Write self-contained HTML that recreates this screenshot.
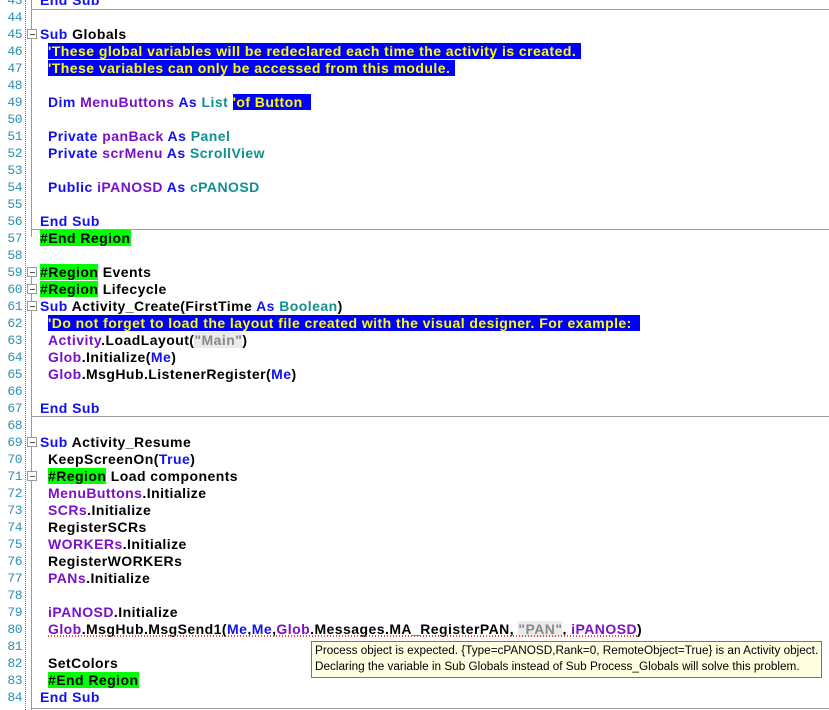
<!DOCTYPE html>
<html><head><meta charset="utf-8"><style>
body{margin:0;width:829px;height:710px;overflow:hidden;background:#fff;position:relative;font-family:"Liberation Sans",Arial,sans-serif}
.r{position:absolute;left:0;height:17px;width:829px}
.n{position:absolute;left:0;width:22px;text-align:right;font:13px "Liberation Mono",monospace;color:#2b91af;top:1px;letter-spacing:-0.5px}
.c{position:absolute;top:0px;font-weight:bold;font-size:14px;letter-spacing:0.45px;white-space:pre;color:#000;line-height:16px}
.k{color:#1010f0}.p{color:#7a10c8}.t{color:#109090}
.cm{background:#0000ff;color:#ffff00}
.g{background:#00ff00}
.s{background:#eaeaea;color:#888}
.sep{position:absolute;left:32px;right:0;height:1px;background:#a0a0a0}
.box{position:absolute;left:27px;width:8px;height:8px;border:1px solid #999;background:#fff}
.box:after{content:"";position:absolute;left:2px;top:4px;width:5px;height:1px;background:#555}
.vl{position:absolute;left:31px;width:1px;background:#999}
.dot{position:absolute;left:25px;top:0;height:710px;border-left:1px dotted #2b91af}
.tip{position:absolute;left:311px;top:641px;background:#ffffe1;border:1px solid #767676;font-size:11.75px;line-height:16px;padding:1px 0 0 3px;box-sizing:border-box;width:511px;height:37px;color:#000;white-space:nowrap;overflow:hidden}
.wav{position:absolute;left:48px;top:635px;width:590px;height:2px;background:repeating-linear-gradient(90deg,#e44 0 1px,transparent 1px 3px)}
</style></head><body>
<div class="dot"></div>
<div class="vl" style="top:0;height:237px"></div>
<div class="vl" style="top:274px;height:436px"></div>
<div class="sep" style="top:9px"></div>
<div class="sep" style="top:229px"></div>
<div class="sep" style="top:416px"></div>
<div class="sep" style="top:708px"></div>
<div class="box" style="top:29px"></div>
<div class="box" style="top:267px"></div>
<div class="box" style="top:284px"></div>
<div class="box" style="top:301px"></div>
<div class="box" style="top:437px"></div>
<div class="box" style="top:471px"></div>

<div class="r" style="top:-8px"><span class="n">43</span><span class="c k" style="left:40px">End Sub</span></div>
<div class="r" style="top:9px"><span class="n">44</span></div>
<div class="r" style="top:26px"><span class="n">45</span><span class="c" style="left:40px"><span class="k">Sub</span> Globals</span></div>
<div class="r" style="top:43px"><span class="n">46</span><span class="c" style="left:48px"><span class="cm">'These global variables will be redeclared each time the activity is created. </span></span></div>
<div class="r" style="top:60px"><span class="n">47</span><span class="c" style="left:48px"><span class="cm">'These variables can only be accessed from this module. </span></span></div>
<div class="r" style="top:77px"><span class="n">48</span></div>
<div class="r" style="top:94px"><span class="n">49</span><span class="c" style="left:48px"><span class="k">Dim</span> <span class="p">MenuButtons</span> <span class="k">As</span> <span class="t">List</span> <span class="cm">'of Button  </span></span></div>
<div class="r" style="top:111px"><span class="n">50</span></div>
<div class="r" style="top:128px"><span class="n">51</span><span class="c" style="left:48px"><span class="k">Private</span> <span class="p">panBack</span> <span class="k">As</span> <span class="t">Panel</span></span></div>
<div class="r" style="top:145px"><span class="n">52</span><span class="c" style="left:48px"><span class="k">Private</span> <span class="p">scrMenu</span> <span class="k">As</span> <span class="t">ScrollView</span></span></div>
<div class="r" style="top:162px"><span class="n">53</span></div>
<div class="r" style="top:179px"><span class="n">54</span><span class="c" style="left:48px"><span class="k">Public</span> <span class="p">iPANOSD</span> <span class="k">As</span> <span class="t">cPANOSD</span></span></div>
<div class="r" style="top:196px"><span class="n">55</span></div>
<div class="r" style="top:213px"><span class="n">56</span><span class="c k" style="left:40px">End Sub</span></div>
<div class="r" style="top:230px"><span class="n">57</span><span class="c" style="left:40px"><span class="g">#End Region</span></span></div>
<div class="r" style="top:247px"><span class="n">58</span></div>
<div class="r" style="top:264px"><span class="n">59</span><span class="c" style="left:40px"><span class="g">#Region</span> Events</span></div>
<div class="r" style="top:281px"><span class="n">60</span><span class="c" style="left:40px"><span class="g">#Region</span> Lifecycle</span></div>
<div class="r" style="top:298px"><span class="n">61</span><span class="c" style="left:40px"><span class="k">Sub</span> Activity_Create(FirstTime <span class="k">As</span> <span class="t">Boolean</span>)</span></div>
<div class="r" style="top:315px"><span class="n">62</span><span class="c" style="left:48px"><span class="cm">'Do not forget to load the layout file created with the visual designer. For example:  </span></span></div>
<div class="r" style="top:332px"><span class="n">63</span><span class="c" style="left:48px"><span class="p">Activity</span>.LoadLayout(<span class="s">"Main"</span>)</span></div>
<div class="r" style="top:349px"><span class="n">64</span><span class="c" style="left:48px"><span class="p">Glob</span>.Initialize(<span class="k">Me</span>)</span></div>
<div class="r" style="top:366px"><span class="n">65</span><span class="c" style="left:48px"><span class="p">Glob</span>.MsgHub.ListenerRegister(<span class="k">Me</span>)</span></div>
<div class="r" style="top:383px"><span class="n">66</span></div>
<div class="r" style="top:400px"><span class="n">67</span><span class="c k" style="left:40px">End Sub</span></div>
<div class="r" style="top:417px"><span class="n">68</span></div>
<div class="r" style="top:434px"><span class="n">69</span><span class="c" style="left:40px"><span class="k">Sub</span> Activity_Resume</span></div>
<div class="r" style="top:451px"><span class="n">70</span><span class="c" style="left:48px">KeepScreenOn(<span class="k">True</span>)</span></div>
<div class="r" style="top:468px"><span class="n">71</span><span class="c" style="left:48px"><span class="g">#Region</span> Load components</span></div>
<div class="r" style="top:485px"><span class="n">72</span><span class="c" style="left:48px"><span class="p">MenuButtons</span>.Initialize</span></div>
<div class="r" style="top:502px"><span class="n">73</span><span class="c" style="left:48px"><span class="p">SCRs</span>.Initialize</span></div>
<div class="r" style="top:519px"><span class="n">74</span><span class="c" style="left:48px">RegisterSCRs</span></div>
<div class="r" style="top:536px"><span class="n">75</span><span class="c" style="left:48px"><span class="p">WORKERs</span>.Initialize</span></div>
<div class="r" style="top:553px"><span class="n">76</span><span class="c" style="left:48px">RegisterWORKERs</span></div>
<div class="r" style="top:570px"><span class="n">77</span><span class="c" style="left:48px"><span class="p">PANs</span>.Initialize</span></div>
<div class="r" style="top:587px"><span class="n">78</span></div>
<div class="r" style="top:604px"><span class="n">79</span><span class="c" style="left:48px"><span class="p">iPANOSD</span>.Initialize</span></div>
<div class="r" style="top:621px"><span class="n">80</span><span class="c" style="left:48px"><span class="p">Glob</span>.MsgHub.MsgSend1(<span class="k">Me</span>,<span class="k">Me</span>,<span class="p">Glob</span>.Messages.MA_RegisterPAN, <span class="s">"PAN"</span>, <span class="p">iPANOSD</span>)</span></div>
<div class="wav"></div>
<div class="r" style="top:638px"><span class="n">81</span></div>
<div class="r" style="top:655px"><span class="n">82</span><span class="c" style="left:48px">SetColors</span></div>
<div class="r" style="top:672px"><span class="n">83</span><span class="c" style="left:48px"><span class="g">#End Region</span></span></div>
<div class="r" style="top:689px"><span class="n">84</span><span class="c k" style="left:40px">End Sub</span></div>
<div class="tip">Process object is expected. {Type=cPANOSD,Rank=0, RemoteObject=True} is an Activity object.<br>Declaring the variable in Sub Globals instead of Sub Process_Globals will solve this problem.</div>
</body></html>
